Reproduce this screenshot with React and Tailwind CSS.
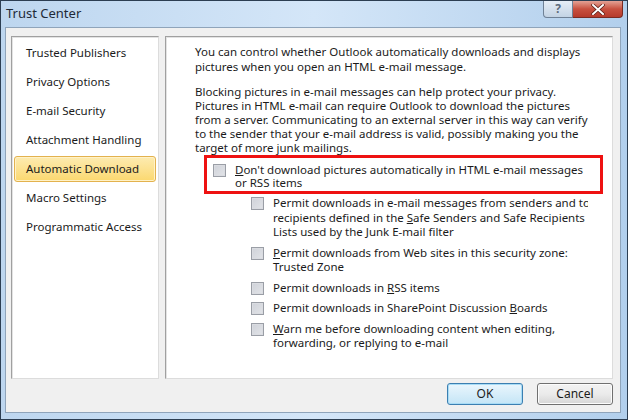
import React from "react"

const navItems = [
  "Trusted Publishers",
  "Privacy Options",
  "E-mail Security",
  "Attachment Handling",
  "Automatic Download",
  "Macro Settings",
  "Programmatic Access",
]

function Check() {
  return (
    <span className="block shrink-0 w-[13px] h-[13px] border border-[#9a9ea6] bg-gradient-to-br from-[#cfd2d9] to-[#e2e4e8] shadow-[inset_0_0_0_1px_#dadce1]" />
  )
}

function Option({ children }) {
  return (
    <div className="flex items-start gap-[9px]">
      <div className="pt-[1px]">
        <Check />
      </div>
      <div className="whitespace-nowrap">{children}</div>
    </div>
  )
}

export default function App() {
  return (
    <div
      className="w-[628px] h-[420px] flex flex-col border border-[#2c3e52] bg-gradient-to-r from-[#bdd6ef] via-[#d4e6f8] to-[#b2cfec] text-[#1b1b1b] overflow-hidden"
      style={{ fontFamily: '"Segoe UI", "Noto Sans", sans-serif' }}
    >
      {/* Title bar */}
      <div className="h-[26px] flex items-start shrink-0">
        <div className="pl-[5px] pt-[4px] text-[13px] leading-[17px] text-[#1e2a38]">Trust Center</div>
        <div className="flex-1" />
        <div className="flex mr-[4px]">
          <div className="w-[30px] h-[17px] rounded-bl-[4px] border border-t-0 border-[#6f8196] bg-gradient-to-b from-[#e6eef7] to-[#c3d3e4] flex items-center justify-center text-[12px] font-bold leading-none text-[#5b6b7d]">
            ?
          </div>
          <div className="w-[50px] h-[17px] rounded-br-[4px] border border-t-0 border-l-0 border-[#7a2a22] bg-gradient-to-b from-[#e3a195] via-[#c8503f] to-[#b63a2b] flex items-center justify-center">
            <svg width="14" height="11" viewBox="0 0 14 11">
              <path d="M2 1 L12 10 M12 1 L2 10" stroke="#5a1a12" strokeWidth="3.4" strokeLinecap="square" />
              <path d="M2 1 L12 10 M12 1 L2 10" stroke="#ffffff" strokeWidth="2" strokeLinecap="square" />
            </svg>
          </div>
        </div>
      </div>

      {/* Body */}
      <div className="flex-1 ml-[4px] mr-[6px] mb-[6px] bg-[#f0f0f0] border border-[#8fa4ba] flex flex-col pl-[5px] pr-[7px] pt-[8px]">
        <div className="flex gap-[6px] h-[343px]">
          {/* Left nav */}
          <div className="w-[148px] bg-white border border-[#a0a0a0] border-r-[#dcdcdc] border-b-[#dcdcdc] shadow-[inset_1px_1px_0_#e3e3e3] pt-[1px] text-[11.5px]">
            {navItems.map((item) => (
              <div key={item} className="h-[29px] px-[2px] flex items-center">
                {item === "Automatic Download" ? (
                  <div className="w-full h-[26px] flex items-center pl-[11px] rounded-[3px] border border-[#e3b24e] bg-gradient-to-b from-[#fdebb0] to-[#fbd86e] shadow-[inset_0_0_0_1px_#fff2c8]">
                    {item}
                  </div>
                ) : (
                  <div className="pl-[12px]">{item}</div>
                )}
              </div>
            ))}
          </div>

          {/* Right content */}
          <div className="flex-1 bg-white border border-[#a0a0a0] border-r-[#dcdcdc] border-b-[#dcdcdc] shadow-[inset_1px_1px_0_#e3e3e3] pl-[29px] pt-[8px] text-[11.5px] leading-[14.5px] overflow-hidden">
            <div className="whitespace-nowrap">
              <p>
                You can control whether Outlook automatically downloads and displays
                <br />
                pictures when you open an HTML e-mail message.
              </p>
              <p className="mt-[11px] leading-[14px]">
                Blocking pictures in e-mail messages can help protect your privacy.
                <br />
                Pictures in HTML e-mail can require Outlook to download the pictures
                <br />
                from a server. Communicating to an external server in this way can verify
                <br />
                to the sender that your e-mail address is valid, possibly making you the
                <br />
                target of more junk mailings.
              </p>
            </div>

            <div className="ml-[9px] w-[399px] border-[3px] border-[#ee1111] pl-[6px] pt-[5px] pb-[2px] leading-[13px]">
              <Option>
                <span className="underline">D</span>on't download pictures automatically in HTML e-mail messages
                <br />
                or RSS items
              </Option>
            </div>

            <div className="ml-[56px] mt-[2px] w-[337px] overflow-hidden flex flex-col gap-[6px]">
              <Option>
                Permit downloads in e-mail messages from senders and to
                <br />
                recipients defined in the <span className="underline">S</span>afe Senders and Safe Recipients
                <br />
                Lists used by the Junk E-mail filter
              </Option>
              <Option>
                <span className="underline">P</span>ermit downloads from Web sites in this security zone:
                <br />
                Trusted Zone
              </Option>
              <Option>
                Permit downloads in <span className="underline">R</span>SS items
              </Option>
              <Option>
                Permit downloads in SharePoint Discussion <span className="underline">B</span>oards
              </Option>
              <Option>
                <span className="underline">W</span>arn me before downloading content when editing,
                <br />
                forwarding, or replying to e-mail
              </Option>
            </div>
          </div>
        </div>

        {/* Buttons */}
        <div className="flex justify-end gap-[14px] mt-[4px] text-[12px]">
          <button className="w-[76px] h-[22px] rounded-[3px] border border-[#3c7fb1] bg-gradient-to-b from-[#eaf6fd] to-[#c4e5f6] shadow-[inset_0_0_0_1px_#a8dcf6]">
            OK
          </button>
          <button className="w-[76px] h-[22px] rounded-[3px] border border-[#707070] bg-gradient-to-b from-[#f2f2f2] via-[#ebebeb] to-[#d6d6d6] shadow-[inset_0_0_0_1px_#fcfcfc]">
            Cancel
          </button>
        </div>
      </div>
    </div>
  )
}
